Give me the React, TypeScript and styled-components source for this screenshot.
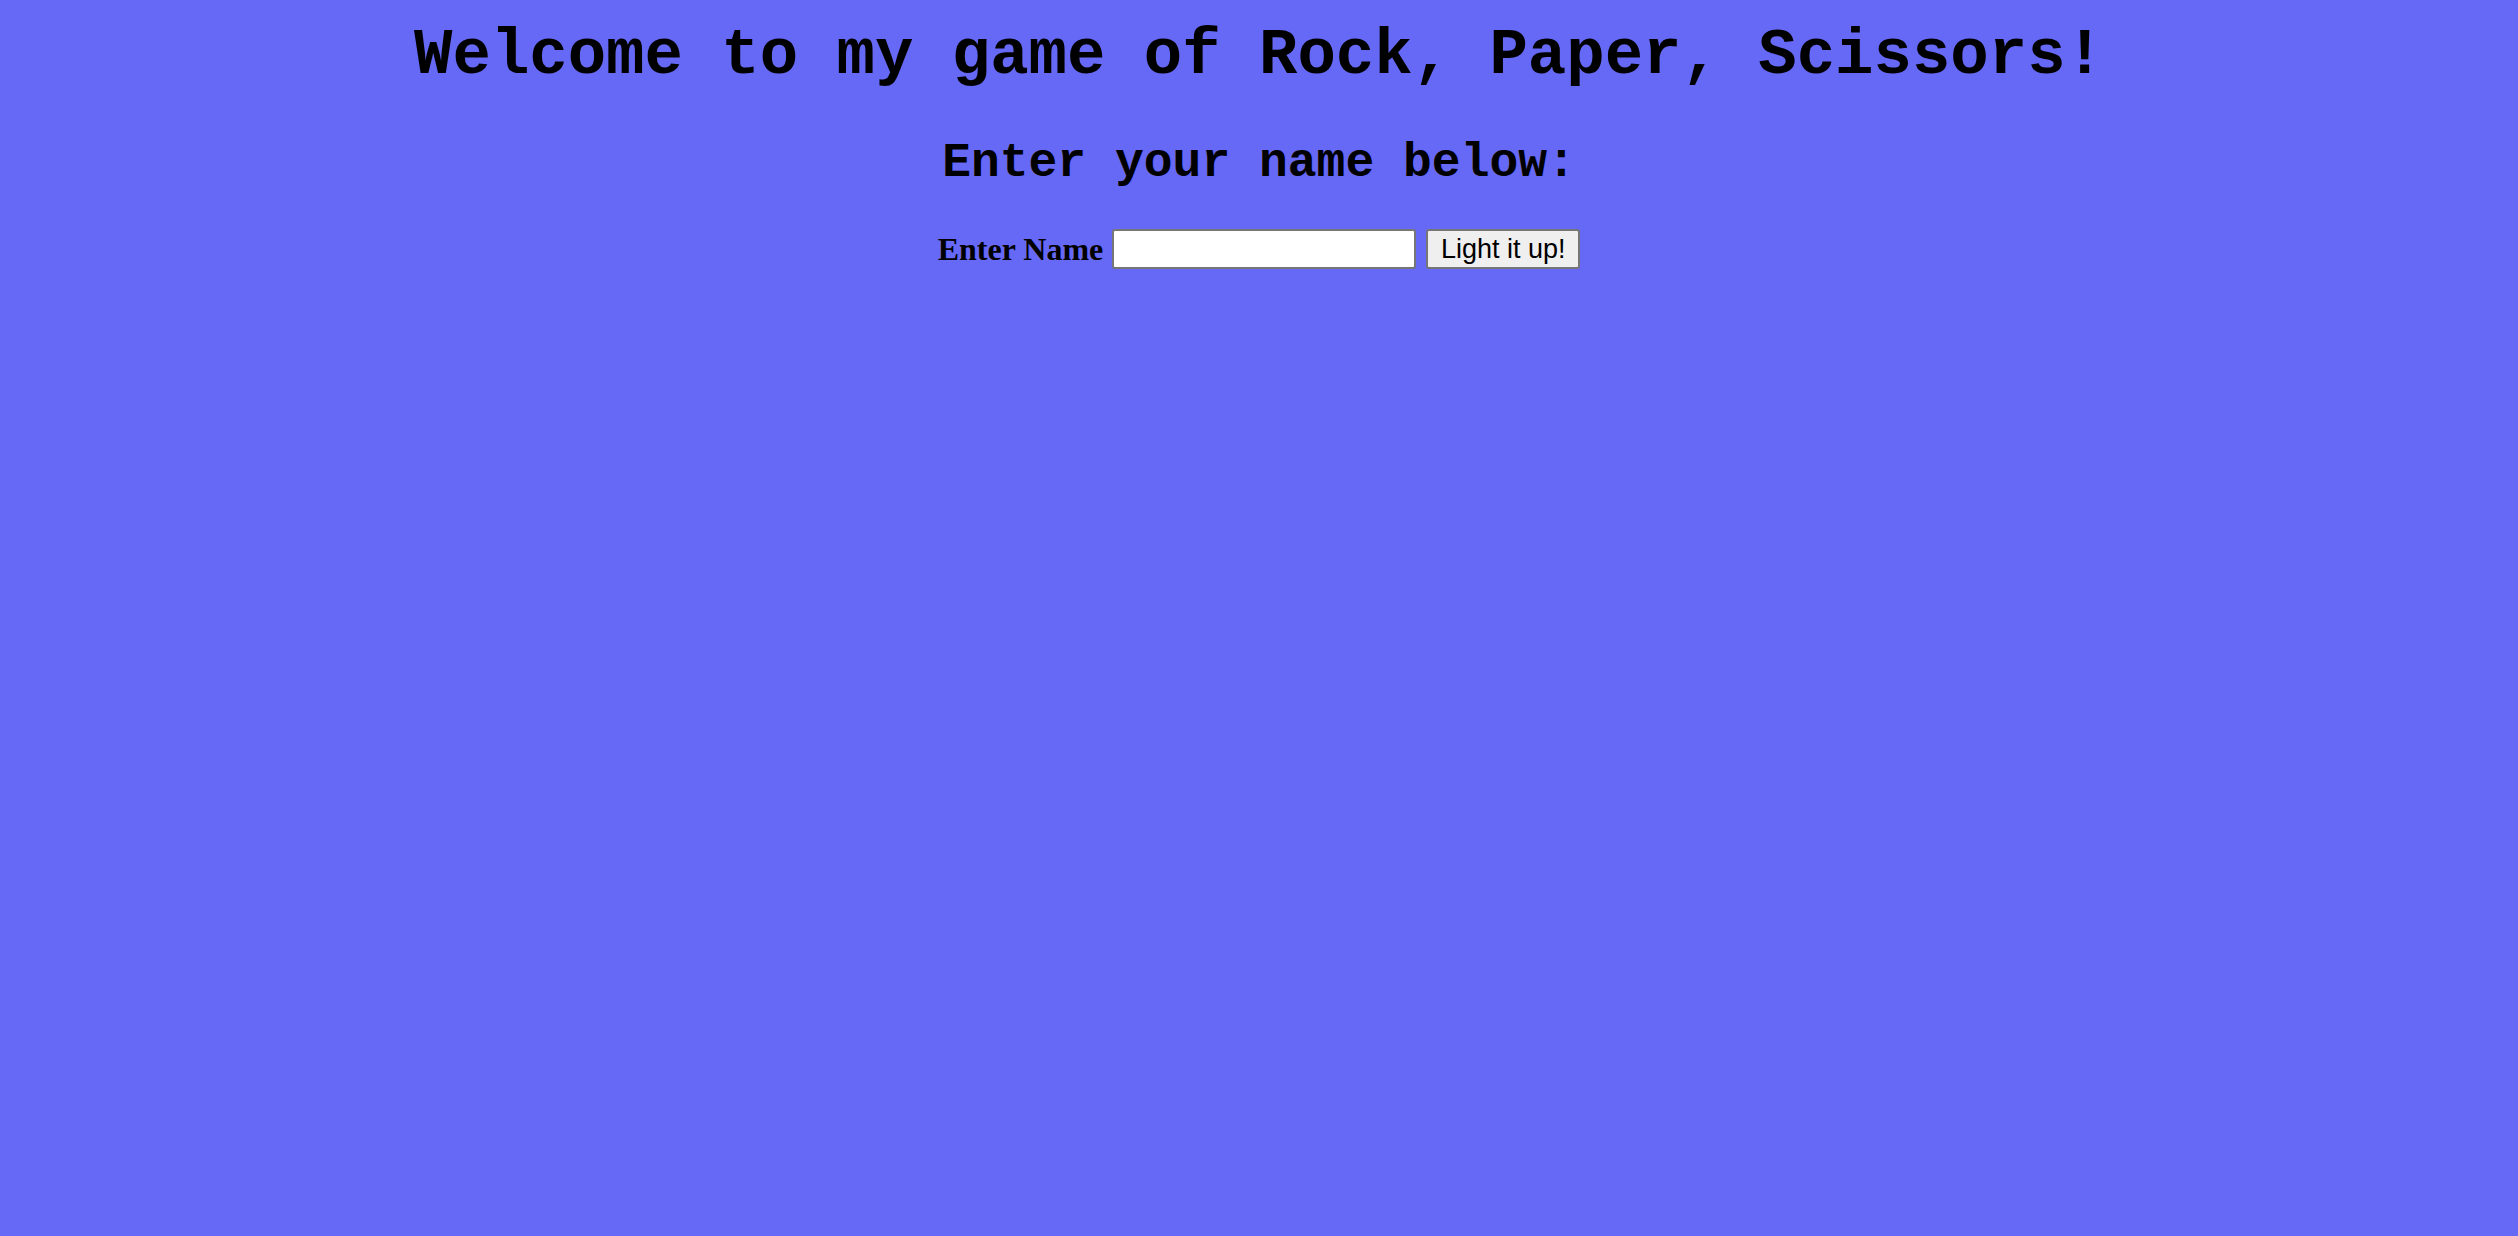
import React, { useState } from "react";
import styled, { createGlobalStyle } from "styled-components";

const GlobalStyle = createGlobalStyle`
  html, body {
    margin: 0;
    padding: 0;
    background: #6669f6;
  }
  body {
    min-height: 100vh;
    font-family: "Liberation Serif", "Times New Roman", serif;
    color: #000;
  }
`;

const Page = styled.main`
  display: flex;
  flex-direction: column;
  align-items: center;
  padding-top: 20px;
  min-height: 100vh;
  box-sizing: border-box;
  background: #6669f6;
`;

const Title = styled.h1`
  margin: 0;
  font-family: "Liberation Mono", "Courier New", monospace;
  font-weight: bold;
  font-size: 64px;
  line-height: 72px;
  text-align: center;
  white-space: nowrap;
`;

const Subtitle = styled.h2`
  margin: 44px 0 0;
  font-family: "Liberation Mono", "Courier New", monospace;
  font-weight: bold;
  font-size: 48px;
  line-height: 54px;
  text-align: center;
  white-space: nowrap;
`;

const Form = styled.form`
  margin-top: 39px;
  display: flex;
  align-items: center;
  gap: 9px;
`;

const Label = styled.label`
  font-family: "Liberation Serif", "Times New Roman", serif;
  font-weight: bold;
  font-size: 32px;
  line-height: 39px;
`;

const NameInput = styled.input`
  box-sizing: border-box;
  width: 304px;
  height: 40px;
  padding: 1px 4px;
  border: 2px solid #767676;
  border-radius: 3px;
  background: #fff;
  font-family: "Liberation Sans", Arial, sans-serif;
  font-size: 24px;
  outline: none;
`;

const SubmitButton = styled.button`
  box-sizing: border-box;
  margin-left: 1px;
  width: 154px;
  height: 40px;
  padding: 0 6px;
  border: 2px solid #767676;
  border-radius: 3px;
  background: #efefef;
  color: #000;
  font-family: "Liberation Sans", Arial, sans-serif;
  font-size: 27px;
  line-height: 36px;
  cursor: pointer;
`;

export default function App() {
  const [name, setName] = useState("");
  return (
    <>
      <GlobalStyle />
      <Page>
        <Title>Welcome to my game of Rock, Paper, Scissors!</Title>
        <Subtitle>Enter your name below:</Subtitle>
        <Form onSubmit={(e) => e.preventDefault()}>
          <Label htmlFor="player-name">Enter Name</Label>
          <NameInput
            id="player-name"
            type="text"
            value={name}
            onChange={(e) => setName(e.target.value)}
          />
          <SubmitButton type="submit">Light it up!</SubmitButton>
        </Form>
      </Page>
    </>
  );
}
